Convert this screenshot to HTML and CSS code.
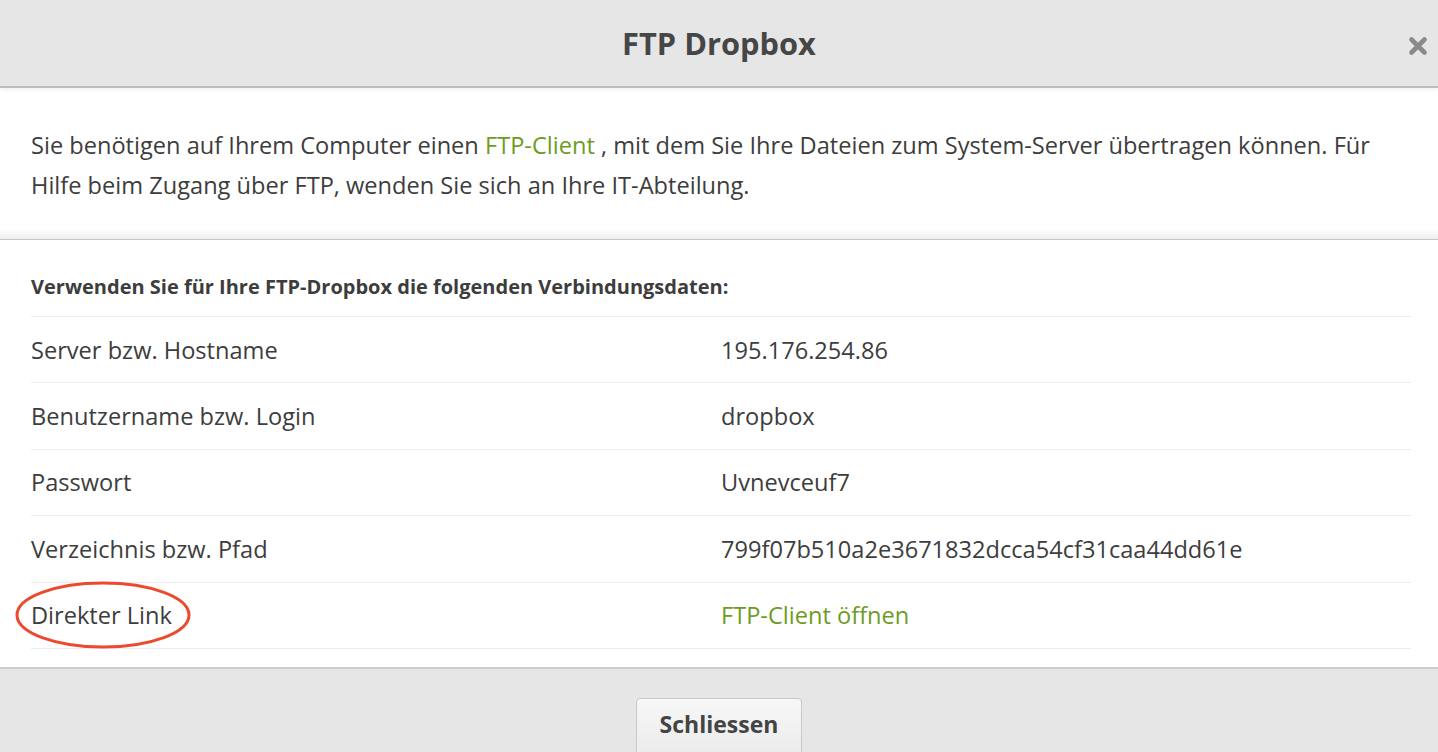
FILE: index.html
```html
<!DOCTYPE html>
<html lang="de">
<head>
<meta charset="utf-8">
<title>FTP Dropbox</title>
<link rel="stylesheet" href="styles.css">
</head>
<body>
<div class="modal">
  <header class="modal-header">
    <h1 class="modal-title">FTP Dropbox</h1>
    <button class="close" aria-label="Schliessen">
      <svg width="20" height="20" viewBox="0 0 20 20"><path d="M3.5 3.5 L16.5 16.5 M16.5 3.5 L3.5 16.5" stroke="#8a8a8a" stroke-width="4.6" stroke-linecap="round"/></svg>
    </button>
  </header>
  <section class="intro">
    <p>Sie benötigen auf Ihrem Computer einen <a href="#" class="link">FTP-Client</a> , mit dem Sie Ihre Dateien zum System-Server übertragen können. Für Hilfe beim Zugang über FTP, wenden Sie sich an Ihre IT-Abteilung.</p>
  </section>
  <section class="details">
    <div class="details-head">Verwenden Sie für Ihre FTP-Dropbox die folgenden Verbindungsdaten:</div>
    <div class="row"><div class="label">Server bzw. Hostname</div><div class="value">195.176.254.86</div></div>
    <div class="row"><div class="label">Benutzername bzw. Login</div><div class="value">dropbox</div></div>
    <div class="row"><div class="label">Passwort</div><div class="value">Uvnevceuf7</div></div>
    <div class="row"><div class="label">Verzeichnis bzw. Pfad</div><div class="value">799f07b510a2e3671832dcca54cf31caa44dd61e</div></div>
    <div class="row row-last">
      <div class="label marked">Direkter Link
        <svg class="circle" width="178" height="70" viewBox="0 0 178 70"><ellipse cx="89" cy="35" rx="86" ry="32" fill="none" stroke="#ec4a2e" stroke-width="3"/></svg>
      </div>
      <div class="value"><a href="#" class="link">FTP-Client öffnen</a></div>
    </div>
  </section>
  <footer class="modal-footer">
    <button class="btn">Schliessen</button>
  </footer>
</div>
</body>
</html>
```
FILE: styles.css
```css
html, body {
  margin: 0;
  padding: 0;
  background: #ffffff;
}
body {
  font-family: "Open Sans", "Noto Sans", sans-serif;
  color: #3d3d3d;
  overflow: hidden;
  height: 752px;
}
.modal {
  display: flex;
  flex-direction: column;
  width: 1438px;
}
.modal-header {
  height: 86px;
  background: #e6e6e6;
  border-bottom: 2px solid #bdbdbd;
  box-shadow: 0 2px 4px rgba(0,0,0,0.06);
  display: flex;
  align-items: center;
  justify-content: center;
  position: relative;
}
.modal-title {
  margin: 0;
  font-size: 30.8px;
  font-weight: 700;
  color: #464646;
  letter-spacing: 0;
}
.close {
  position: absolute;
  right: 9px;
  top: 35px;
  width: 22px;
  height: 22px;
  padding: 0;
  border: 0;
  background: none;
  display: flex;
  align-items: center;
  justify-content: center;
}
.intro {
  padding: 37px 31px 25px 31px;
  border-bottom: 1px solid #c9c9c9;
  position: relative;
}
.intro::after {
  content: "";
  position: absolute;
  left: 0;
  right: 0;
  bottom: 0;
  height: 10px;
  background: linear-gradient(to bottom, rgba(0,0,0,0), rgba(0,0,0,0.07));
}
.intro p {
  margin: 0 0 9px 0;
  font-size: 23.6px;
  line-height: 40px;
  max-width: 1376px;
}
.link {
  color: #6e9c1f;
  text-decoration: none;
}
.details {
  padding: 18px 27px 18px 31px;
}
.details-head {
  font-size: 20px;
  font-weight: 700;
  line-height: 58px;
  color: #3d3d3d;
}
.row {
  display: flex;
  align-items: center;
  height: 65.4px;
  border-top: 1px solid #ececec;
  font-size: 23.6px;
}
.row-last {
  border-bottom: 1px solid #ececec;
}
.label {
  width: 690px;
  flex: none;
}
.marked {
  position: relative;
}
.circle {
  position: absolute;
  left: -17px;
  top: -19px;
}
.value {
  flex: 1;
}
.modal-footer {
  flex: 1;
  background: #e6e6e6;
  border-top: 2px solid #cdcdcd;
  height: 85px;
  display: flex;
  justify-content: center;
  padding-top: 29px;
  box-sizing: border-box;
}
.btn {
  width: 166px;
  height: 60px;
  font-family: "Open Sans", "Noto Sans", sans-serif;
  font-size: 23px;
  font-weight: 700;
  color: #444;
  background: linear-gradient(to bottom, #f7f7f7, #ebebeb);
  border: 1px solid #c9c9c9;
  border-radius: 4px;
  padding: 0 0 8px 0;
  margin: 0;
}
```
